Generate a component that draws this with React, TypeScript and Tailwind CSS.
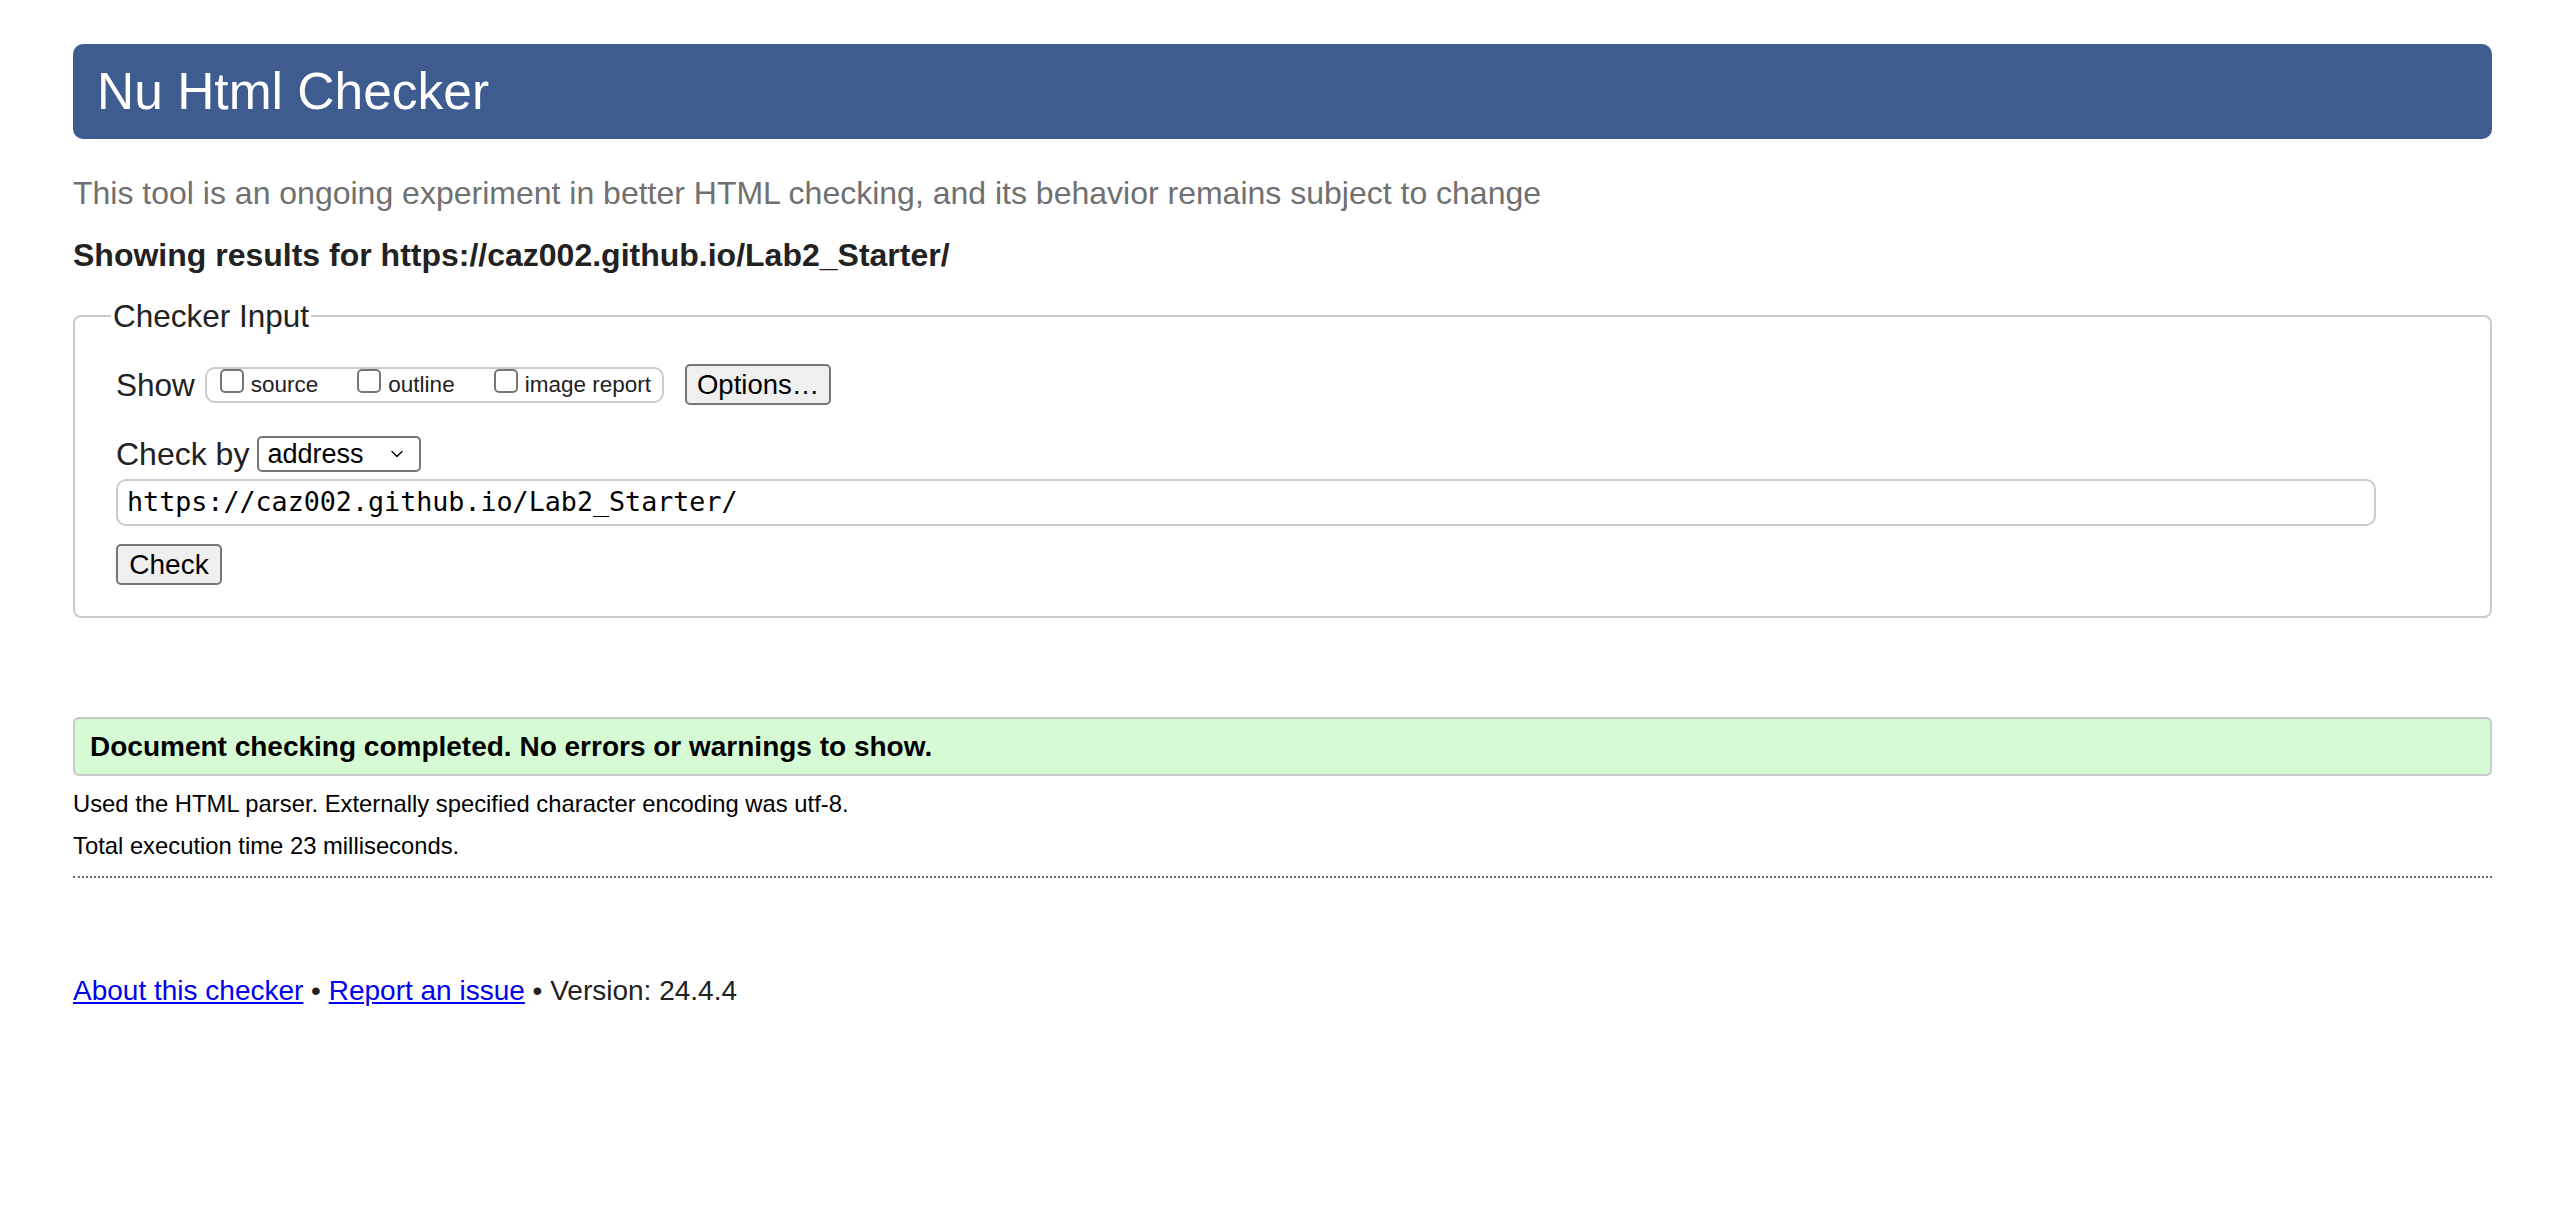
import { ChevronDown } from 'lucide-react';

function Box({ label }: { label: string }) {
  return (
    <label className="flex items-center">
      <input
        type="checkbox"
        className="appearance-none w-[24px] h-[24px] rounded-[5px] border-2 border-[#767676] bg-white -translate-y-[4px]"
      />
      <span className="ml-[7px] text-[22.5px] leading-[28px]">{label}</span>
    </label>
  );
}

export default function App() {
  return (
    <div className="min-h-screen bg-white pl-[73px] pr-[70px] pt-[44px] font-['Liberation_Sans',Arial,sans-serif] text-[#222]">
      {/* Title bar */}
      <header className="h-[95px] rounded-[10px] bg-[#3e5c90] flex items-center px-[24px]">
        <h1 className="text-[51.5px] leading-none text-white">Nu Html Checker</h1>
      </header>

      <p className="mt-[36px] text-[32px] leading-[36px] text-[#707070]">
        This tool is an ongoing experiment in better HTML checking, and its behavior remains subject to change
      </p>
      <p className="mt-[26px] text-[32px] leading-[36px] font-bold">
        Showing results for https://caz002.github.io/Lab2_Starter/
      </p>

      {/* Checker input */}
      <fieldset className="mt-[25px] border-2 border-[#cacaca] rounded-[8px] pl-[41px] pr-[114px] pt-[30px] pb-[31px]">
        <legend className="-ml-[5px] px-[2px] text-[31.5px] leading-[36px]">Checker Input</legend>

        <div className="flex items-center h-[41px]">
          <span className="text-[31.5px] leading-[36px]">Show</span>
          <div className="ml-[10px] h-[36px] flex items-center gap-[39px] border-2 border-[#cccccc] rounded-[10px] pl-[13px] pr-[11px]">
            <Box label="source" />
            <Box label="outline" />
            <Box label="image report" />
          </div>
          <button className="ml-[21px] h-[41px] px-[10px] bg-[#efefef] border-2 border-[#767676] rounded-[5px] text-[27.5px] leading-none text-black">
            Options…
          </button>
        </div>

        <div className="mt-[31px] flex items-center">
          <span className="text-[32px] leading-[36px]">Check by</span>
          <div className="ml-[8px] w-[164px] h-[36px] border-2 border-[#767676] rounded-[5px] bg-white flex items-center justify-between pl-[8px] pr-[12px]">
            <span className="text-[27px] leading-none text-black">address</span>
            <ChevronDown size={20} strokeWidth={1.6} className="text-black" />
          </div>
        </div>

        <div className="mt-[7px] h-[47px] border-2 border-[#cccccc] rounded-[10px] flex items-center px-[9px]">
          <span className="font-['DejaVu_Sans_Mono',monospace] text-[26.7px] leading-none text-black">
            https://caz002.github.io/Lab2_Starter/
          </span>
        </div>

        <button className="mt-[18px] h-[41px] w-[106px] bg-[#efefef] border-2 border-[#767676] rounded-[5px] text-[28px] leading-none text-black">
          Check
        </button>
      </fieldset>

      {/* Result */}
      <div className="mt-[99px] h-[59px] bg-[#d6fbd4] border-2 border-[#c8c8c8] rounded-[6px] flex items-center pl-[15px]">
        <span className="text-[28px] font-bold text-black">
          Document checking completed. No errors or warnings to show.
        </span>
      </div>
      <p className="mt-[14px] text-[23.8px] leading-[28px] text-black">
        Used the HTML parser. Externally specified character encoding was utf-8.
      </p>
      <p className="mt-[14px] text-[23.8px] leading-[28px] text-black">Total execution time 23 milliseconds.</p>
      <div className="mt-[16px] border-t-2 border-dotted border-[#666]" />

      {/* Footer */}
      <p className="mt-[96px] text-[28px] leading-[34px]">
        <a href="#" className="text-[#0000ee] underline">About this checker</a> •{' '}
        <a href="#" className="text-[#0000ee] underline">Report an issue</a> • Version: 24.4.4
      </p>
    </div>
  );
}
